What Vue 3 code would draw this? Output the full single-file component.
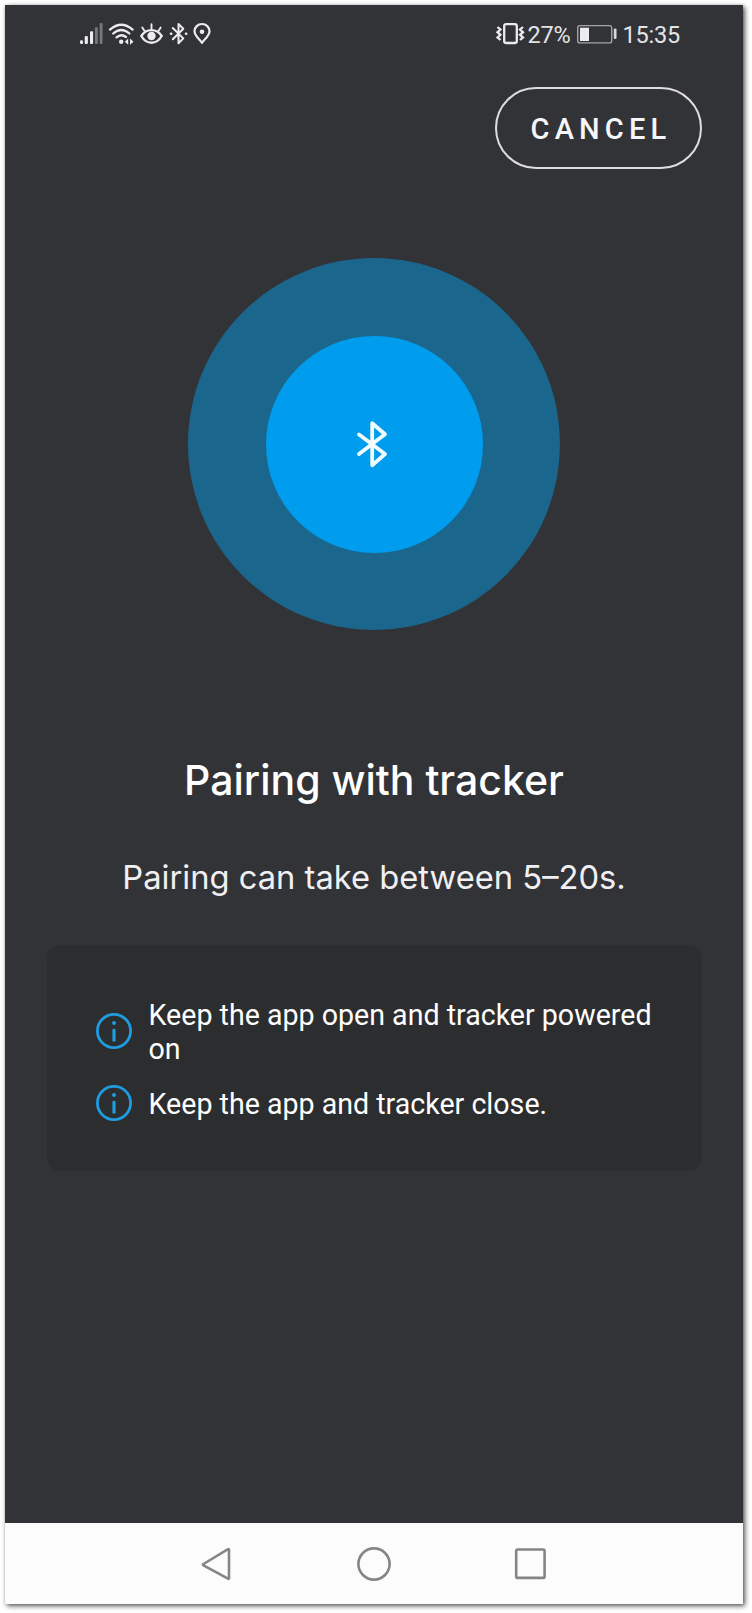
<script setup>
const tips = [
  'Keep the app open and tracker powered on',
  'Keep the app and tracker close.',
]
</script>

<template>
  <div class="page">
    <div class="phone">
      <header class="status">
        <div class="status-left">
          <svg width="24" height="24" viewBox="79 22 24 24" fill="#ececee">
            <rect x="80" y="40.3" width="3" height="3.7" rx="1.2" />
            <rect x="84.7" y="36" width="3.2" height="8" rx="1" />
            <rect x="90" y="31.3" width="3.1" height="12.7" rx="1" />
            <g fill="#77787b">
              <rect x="95" y="27.3" width="2.8" height="16.7" rx="0.8" />
              <rect x="99.7" y="23" width="2.8" height="21" rx="0.8" />
            </g>
          </svg>
          <svg class="wifi" width="28" height="24" viewBox="108 22 28 24" fill="none" stroke="#ececee" stroke-width="2.3" stroke-linecap="round">
            <path d="M110 29.6Q121.3 19.8 132.6 29.6" />
            <path d="M113.2 33.5Q121.3 26.5 129.4 33.5" />
            <path d="M116.5 37.4Q121.3 33.2 126 37" />
            <circle cx="121.2" cy="41.7" r="2.2" fill="#ececee" stroke="none" />
            <path d="M128.2 38.5v6.3l-3.4-3.1zM130 38.5v6.3l3.5-3.1z" fill="#ececee" stroke="none" />
          </svg>
          <svg class="eye" width="26" height="24" viewBox="139 22 26 24" fill="none" stroke="#ececee" stroke-width="2.3" stroke-linecap="round">
            <path d="M141.3 36C146.5 28.3 156.5 28.3 161.7 36C156.5 45 146.5 45 141.3 36Z" />
            <circle cx="151.5" cy="36" r="4.2" fill="#ececee" stroke="none" />
            <path d="M151.5 24.3v5M142.3 27.5l2.4 3.7M160.7 27.5l-2.4 3.7" stroke-width="1.9" />
          </svg>
          <svg class="bt" width="20" height="24" viewBox="168 22 20 24" fill="none" stroke="#ececee" stroke-width="2" stroke-linejoin="round" stroke-linecap="round">
            <path d="M172.8 28L183.3 38.4L178.5 43.3V24L183.3 28.7L172.8 39.3" />
            <path d="M171 33.7h0.2M186 33.7h0.2" stroke-width="2.6" />
          </svg>
          <svg class="pin" width="20" height="24" viewBox="192 22 20 24">
            <path d="M202 42.8C199.2 39 194.5 35.5 194.5 31.2A7.5 7.2 0 0 1 209.5 31.2C209.5 35.5 204.8 39 202 42.8Z" fill="none" stroke="#ececee" stroke-width="2.2" stroke-linejoin="round" />
            <circle cx="202" cy="31.8" r="2.3" fill="#ececee" />
          </svg>
        </div>
        <div class="status-right">
          <svg width="30" height="24" viewBox="495 22 30 24" fill="none" stroke="#ececee">
            <rect x="504.2" y="24.2" width="12.6" height="18.8" rx="2" stroke-width="2.3" />
            <path d="M497.5 27l3 2.6-3 2.6 3 2.6-3 2.6 3 2.6M523 27l-3 2.6 3 2.6-3 2.6 3 2.6-3 2.6" stroke-width="2.3" />
          </svg>
          <span class="percent">27%</span>
          <svg class="battery" width="42" height="24" viewBox="576 22 42 24">
            <rect x="577.7" y="25.6" width="34" height="17.3" rx="2.2" fill="none" stroke="#a4a5a8" stroke-width="1.4" />
            <rect x="580" y="27.7" width="9" height="13.3" fill="#ececee" />
            <rect x="613.8" y="28.5" width="2.7" height="10.5" rx="1" fill="#d8d8da" />
          </svg>
          <span class="clock">15:35</span>
        </div>
      </header>

      <button class="cancel">CANCEL</button>

      <div class="pulse">
        <div class="core">
          <svg width="34" height="50" viewBox="356 419 34 50" fill="none" stroke="#f2fcff" stroke-width="3.8" stroke-linecap="round" stroke-linejoin="round">
            <path d="M359 434.5L385 454L372.2 465.3V423.2L385 434.2L359 454" />
          </svg>
        </div>
      </div>

      <h1>Pairing with tracker</h1>
      <p class="lead">Pairing can take between 5–20s.</p>

      <ul class="tips">
        <li v-for="tip in tips" :key="tip">
          <svg width="36" height="36" viewBox="0 0 36 36" fill="none" stroke="#1f9be0">
            <circle cx="18" cy="18" r="16.6" stroke-width="2.8" />
            <path d="M18 17v10.2" stroke-width="3.2" stroke-linecap="round" />
            <circle cx="18" cy="10" r="2" fill="#1f9be0" stroke="none" />
          </svg>
          <span>{{ tip }}</span>
        </li>
      </ul>

      <nav class="navbar">
        <svg width="34" height="36" viewBox="0 0 34 36"><path d="M3.5 18L28 3.2Q29 2.8 29 4V32Q29 33.2 28 32.7L3.5 19.3Q2.4 18.6 3.5 18Z" /></svg>
        <svg width="36" height="36" viewBox="0 0 36 36"><circle cx="18" cy="18" r="15.6" /></svg>
        <svg width="34" height="36" viewBox="0 0 34 36"><rect x="2.2" y="3.5" width="28.4" height="28.4" rx="1.5" /></svg>
      </nav>
    </div>
  </div>
</template>

<style>
body {
  background: #fff;
}
</style>

<style scoped>
.page {
  box-sizing: border-box;
  width: 752px;
  height: 1613px;
  padding: 5px;
  overflow: hidden;
}
.phone {
  display: flex;
  flex-direction: column;
  width: 738px;
  height: 1599px;
  background: #323337;
  box-shadow: 2px 2px 5px rgba(0, 0, 0, 0.65), 0 0 3px rgba(0, 0, 0, 0.15);
  font-family: Roboto, sans-serif;
  color: #fff;
}
.status {
  display: flex;
  justify-content: space-between;
  height: 24px;
  margin: 17px 63px 0 74px;
}
.status-left,
.status-right {
  display: flex;
}
.wifi {
  margin-left: 5px;
}
.eye,
.bt {
  margin-left: 3px;
}
.pin {
  margin-left: 4px;
}
.status-right {
  font-size: 23.5px;
  line-height: 26px;
  letter-spacing: -0.2px;
  color: #e4e4e6;
}
.percent {
  box-sizing: border-box;
  width: 51px;
  padding-left: 2px;
  white-space: nowrap;
}
.clock {
  margin-left: 4px;
}
.cancel {
  box-sizing: border-box;
  align-self: flex-end;
  width: 207px;
  height: 82px;
  margin: 41px 41px 0 0;
  padding: 1px 0 0 5px;
  border: 2px solid #dedee1;
  border-radius: 41px;
  background: transparent;
  color: #f6f6f8;
  font: 500 29px/32px Roboto, sans-serif;
  letter-spacing: 5.2px;
  white-space: nowrap;
}
.pulse,
.core {
  display: flex;
  align-items: center;
  justify-content: center;
  border-radius: 50%;
}
.pulse {
  align-self: center;
  width: 372px;
  height: 372px;
  margin-top: 89px;
  background: #1b668c;
}
.core {
  width: 217px;
  height: 217px;
  background: #009cee;
}
.core svg {
  margin-right: 2px;
}
h1 {
  margin: 125px 0 0;
  font: 500 41px/50px Inter, sans-serif;
  text-align: center;
}
.lead {
  margin: 52px 0 0;
  font: 400 32.7px/40px Inter, sans-serif;
  text-align: center;
  color: #f0f0f3;
}
.tips {
  box-sizing: border-box;
  display: flex;
  flex-direction: column;
  gap: 21.5px;
  width: 655px;
  height: 226px;
  margin: 48px 0 0 41.5px;
  padding: 54.3px 46px 0 49px;
  border-radius: 14px;
  background: #2c2d2f;
  list-style: none;
  font-size: 28.6px;
  line-height: 33.5px;
}
.tips li {
  display: flex;
  align-items: center;
  gap: 17px;
}
.tips svg {
  flex: none;
  margin-top: -4px;
}
.navbar {
  display: flex;
  justify-content: center;
  align-items: center;
  gap: 122px;
  height: 81px;
  margin-top: auto;
  background: #fcfcfc;
}
.navbar svg {
  fill: none;
  stroke: #858585;
  stroke-width: 2.6;
}
</style>
